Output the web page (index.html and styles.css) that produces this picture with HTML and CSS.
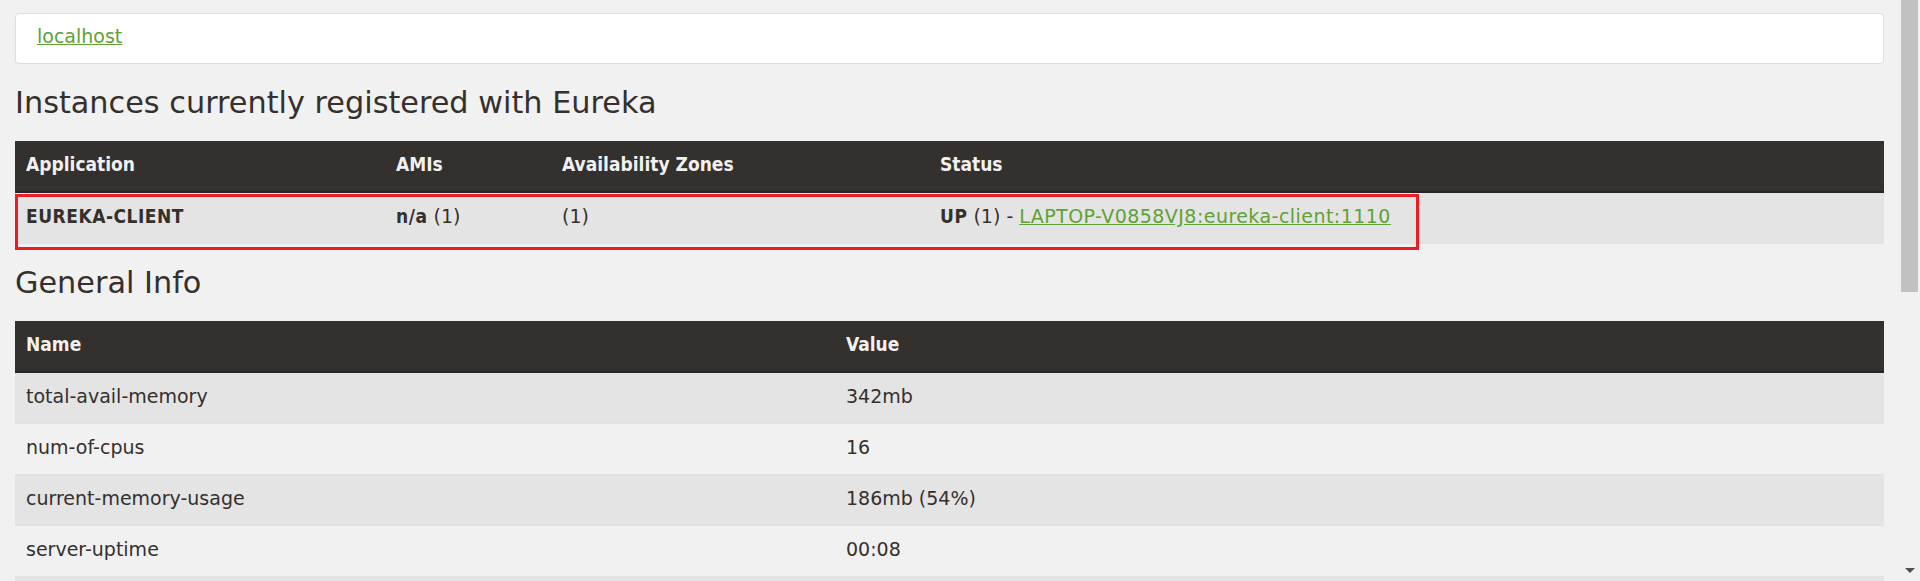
FILE: index.html
```html
<!DOCTYPE html>
<html lang="en">
<head>
<meta charset="utf-8">
<title>Eureka</title>
<link rel="stylesheet" href="styles.css">
</head>
<body>
<div class="page">
  <div class="navbox"><a href="#" class="link">localhost</a></div>

  <h2 class="title">Instances currently registered with Eureka</h2>
  <div class="annotated">
    <table class="grid">
      <colgroup>
        <col class="c-app"><col class="c-ami"><col class="c-az"><col>
      </colgroup>
      <thead>
        <tr><th>Application</th><th>AMIs</th><th>Availability Zones</th><th>Status</th></tr>
      </thead>
      <tbody>
        <tr>
          <td><b class="strong">EUREKA-CLIENT</b></td>
          <td><b class="strong">n/a</b> (1)</td>
          <td>(1)</td>
          <td><b class="strong">UP</b> (1) - <a href="#" class="link instance">LAPTOP-V0858VJ8:eureka-client:1110</a></td>
        </tr>
      </tbody>
    </table>
    <div class="mark"></div>
  </div>

  <h2 class="title">General Info</h2>
  <table class="grid">
    <colgroup>
      <col class="c-name"><col>
    </colgroup>
    <thead>
      <tr><th>Name</th><th>Value</th></tr>
    </thead>
    <tbody>
      <tr><td>total-avail-memory</td><td>342mb</td></tr>
      <tr><td>num-of-cpus</td><td>16</td></tr>
      <tr><td>current-memory-usage</td><td>186mb (54%)</td></tr>
      <tr><td>server-uptime</td><td>00:08</td></tr>
      <tr><td>&nbsp;</td><td>&nbsp;</td></tr>
    </tbody>
  </table>
</div>

<div class="scrollbar">
  <div class="thumb"></div>
  <div class="arrow"></div>
</div>
</body>
</html>
```

FILE: styles.css
```css
html, body {
  margin: 0;
  height: 100%;
}

body {
  background: #f1f1f1;
  color: #34302d;
  font-family: "DejaVu Sans", sans-serif;
  font-size: 19px;
  overflow: hidden;
}

.page {
  width: 1899px;
  box-sizing: border-box;
  padding: 13px 15px 0 15px;
}

.link {
  color: #5fa134;
  text-decoration: underline;
}

.instance {
  letter-spacing: 0.45px;
}

.navbox {
  background: #ffffff;
  border: 1px solid #dddddd;
  border-radius: 4px;
  line-height: 45px;
  padding: 0 21px 4px;
}

.title {
  margin: 21px 0 20px;
  font-size: 30.3px;
  line-height: 36px;
  font-weight: normal;
  color: #34302d;
}

.annotated {
  position: relative;
}

.grid {
  width: 100%;
  table-layout: fixed;
  border-collapse: separate;
  border-spacing: 0;
}

.c-app { width: 370px; }
.c-ami { width: 166px; }
.c-az { width: 378px; }
.c-name { width: 820px; }

.grid th {
  background: #34302d;
  color: #f1f1f1;
  text-align: left;
  font-family: "DejaVu Sans Condensed", "DejaVu Sans", sans-serif;
  font-stretch: condensed;
  font-weight: bold;
  line-height: 47px;
  padding: 0 11px 3px;
  border-bottom: 2px solid #24262a;
  white-space: nowrap;
}

.grid td {
  line-height: 47px;
  padding: 0 11px 3px;
  border-bottom: 1px solid #dee2e6;
  white-space: nowrap;
}

.grid tbody tr:nth-child(odd) td {
  background: #e4e4e4;
}

.strong {
  font-family: "DejaVu Sans Condensed", "DejaVu Sans", sans-serif;
  font-stretch: condensed;
  font-weight: bold;
  letter-spacing: 0.5px;
}

.mark {
  position: absolute;
  left: 0;
  top: 53px;
  width: 1404px;
  height: 56px;
  box-sizing: border-box;
  border: 3px solid #ed1c24;
  pointer-events: none;
}

.scrollbar {
  position: fixed;
  top: 0;
  right: 0;
  width: 21px;
  height: 581px;
  background: #f1f1f1;
}

.thumb {
  margin-left: 2px;
  width: 17px;
  height: 292px;
  background: #c1c1c1;
}

.arrow {
  position: absolute;
  left: 6px;
  bottom: 8px;
  width: 0;
  height: 0;
  border-left: 5px solid transparent;
  border-right: 5px solid transparent;
  border-top: 5px solid #505050;
}
```
